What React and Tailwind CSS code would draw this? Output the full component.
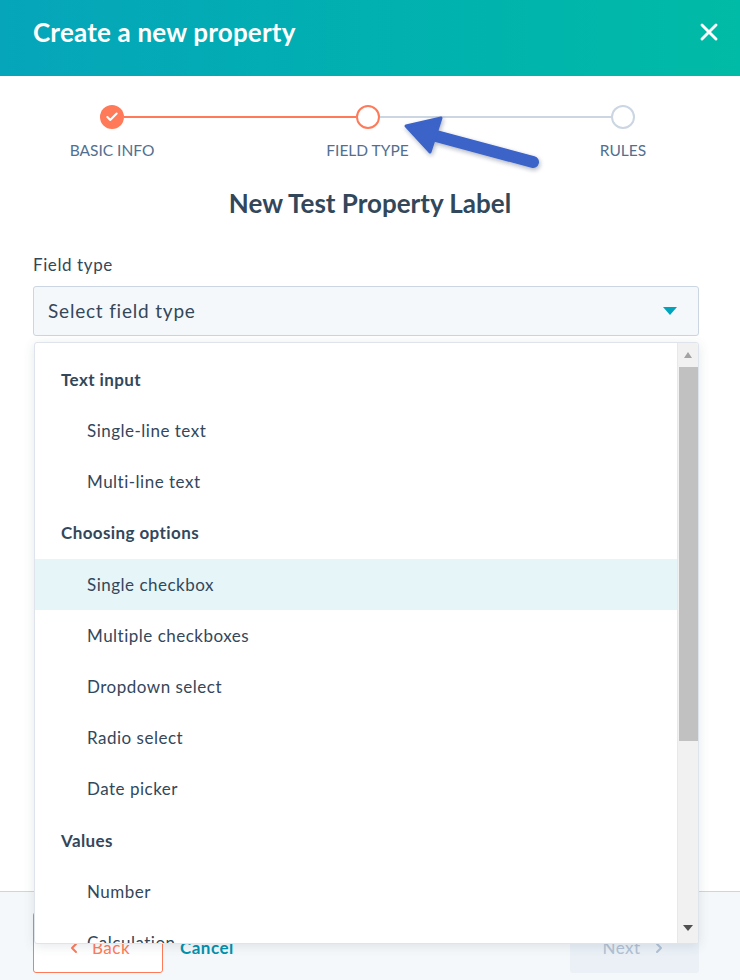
import { X, Check, ChevronLeft, ChevronRight } from "lucide-react";

const groups = [
  {
    title: "Text input",
    items: ["Single-line text", "Multi-line text"],
  },
  {
    title: "Choosing options",
    items: [
      "Single checkbox",
      "Multiple checkboxes",
      "Dropdown select",
      "Radio select",
      "Date picker",
    ],
  },
  {
    title: "Values",
    items: ["Number", "Calculation"],
  },
];

const Stepper = () => (
  <div className="pt-[29px]">
    <div className="ml-[100px] flex w-[535px] items-center">
      <span className="flex h-6 w-6 items-center justify-center rounded-full bg-[#ff7a59]">
        <Check size={14} strokeWidth={3.5} className="text-white" />
      </span>
      <span className="h-[2px] flex-1 bg-[#ff7a59]" />
      <span className="h-6 w-6 rounded-full border-2 border-[#ff7a59] bg-white" />
      <span className="h-[2px] flex-1 bg-[#cbd6e2]" />
      <span className="h-6 w-6 rounded-full border-2 border-[#cbd6e2] bg-white" />
    </div>

    <div className="ml-[50px] mt-[11px] flex w-[635px] justify-between text-[15.5px] leading-5 text-[#516f90]">
      <span className="w-[124px] text-center">BASIC INFO</span>
      <span className="w-[124px] text-center">FIELD TYPE</span>
      <span className="w-[124px] text-center">RULES</span>
    </div>
  </div>
);

const Dropdown = () => (
  <div className="absolute left-[34px] top-[342px] flex h-[602px] w-[665px] overflow-hidden rounded-[3px] border border-[#dfe3eb] bg-white shadow-[0_2px_12px_rgba(45,62,80,0.12)]">
    <div className="flex-1 pt-[11px]">
      {groups.map((group) => (
        <div key={group.title}>
          <div className="flex h-[51.2px] items-center pl-[26px] text-[17px] font-bold tracking-[0.4px] text-[#33475b]">
            {group.title}
          </div>
          {group.items.map((item) => (
            <div
              key={item}
              className={`flex h-[51.2px] items-center pl-[52px] text-[17px] tracking-[0.5px] text-[#33475b] ${
                item === "Single checkbox" ? "bg-[#e5f5f8]" : ""
              }`}
            >
              {item}
            </div>
          ))}
        </div>
      ))}
    </div>

    <div className="flex w-[21px] flex-col items-center border-l border-[#e8e8e8] bg-[#f1f1f1]">
      <div className="flex h-[24px] items-center justify-center">
        <span className="h-0 w-0 border-x-[4px] border-b-[6px] border-x-transparent border-b-[#a3a3a3]" />
      </div>
      <div className="h-[374px] w-[19px] bg-[#c1c1c1]" />
      <div className="flex-1" />
      <div className="flex h-[30px] items-center justify-center">
        <span className="h-0 w-0 border-x-[5px] border-t-[6px] border-x-transparent border-t-[#505050]" />
      </div>
    </div>
  </div>
);

export default function App() {
  return (
    <div className="relative flex h-[980px] w-[740px] flex-col overflow-hidden bg-white font-['Lato',sans-serif] text-[#33475b]">
      <header className="flex h-[76px] shrink-0 items-center justify-between bg-gradient-to-r from-[#06a5ba] to-[#00bba6] pb-[12px] pl-[33px] pr-[17px]">
        <h1 className="text-[26px] font-bold tracking-[0.2px] text-white">Create a new property</h1>
        <X size={28} strokeWidth={2.5} className="text-white" />
      </header>

      <Stepper />

      <h2 className="mt-[27px] text-center text-[26px] font-bold leading-8 text-[#33475b]">
        New Test Property Label
      </h2>

      <div className="pl-[33px] pr-[41px] pt-[34px]">
        <label className="block text-[17px] leading-6 tracking-[0.6px] text-[#33475b]">Field type</label>
        <div className="mt-[9px] flex h-[50px] items-center justify-between rounded-[3px] border border-[#cbd6e2] bg-[#f5f8fa] pl-[14px] pr-[21px]">
          <span className="text-[19px] tracking-[0.8px] text-[#33475b]">Select field type</span>
          <span className="h-0 w-0 border-x-[7px] border-t-[8px] border-x-transparent border-t-[#00a4bd]" />
        </div>
      </div>

      <footer className="mt-auto flex h-[89px] shrink-0 items-start justify-between border-t border-[#cbd6e2] bg-[#f5f8fa] pl-[33px] pr-[41px] pt-[20px]">
        <div className="flex items-center gap-[17px]">
          <button className="flex h-[61px] w-[130px] items-center justify-center gap-[10px] rounded-[3px] border border-[#ff7a59] bg-white pt-[10px] text-[17px] tracking-[0.5px] text-[#ff7a59]">
            <ChevronLeft size={16} strokeWidth={3} />
            Back
          </button>
          <span className="pt-[10px] text-[17px] font-bold tracking-[0.5px] text-[#0091ae]">Cancel</span>
        </div>
        <button className="flex h-[61px] w-[129px] items-center justify-center gap-[10px] rounded-[3px] bg-[#eaf0f6] pt-[10px] text-[17px] tracking-[0.5px] text-[#b0c1d4]">
          Next
          <ChevronRight size={16} strokeWidth={3} />
        </button>
      </footer>

      <Dropdown />

      <svg
        className="absolute left-[395px] top-[110px]"
        width="160"
        height="70"
        viewBox="395 110 160 70"
      >
        <defs>
          <filter id="sh" x="-20%" y="-40%" width="140%" height="180%">
            <feDropShadow dx="1" dy="2" stdDeviation="2" floodColor="#1e2a4a" floodOpacity="0.35" />
          </filter>
        </defs>
        <g filter="url(#sh)" fill="#3a63c8" stroke="#3a63c8">
          <line x1="436" y1="136" x2="533" y2="162" strokeWidth="12" strokeLinecap="round" />
          <polygon points="406,126 441,118 430,152" strokeWidth="3" strokeLinejoin="round" />
        </g>
      </svg>
    </div>
  );
}
